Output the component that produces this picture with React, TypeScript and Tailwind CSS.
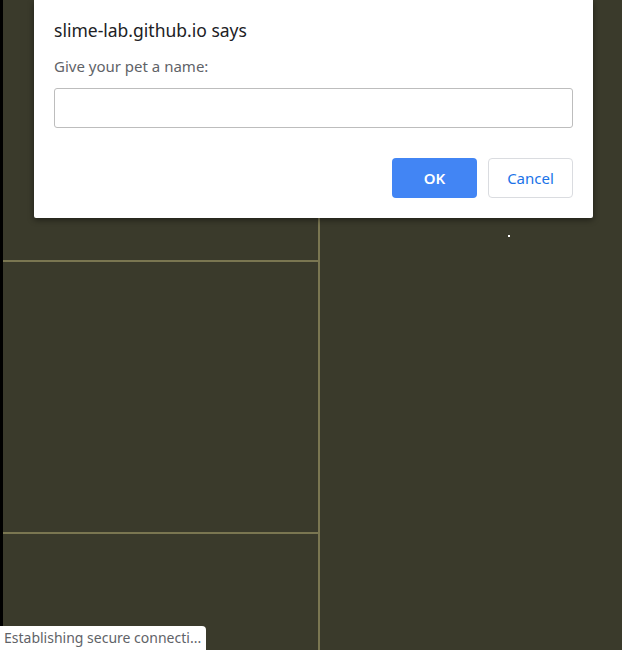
export default function App() {
  return (
    <div className="relative h-[650px] w-[622px] overflow-hidden bg-[#3a3a2b]" style={{ fontFamily: '"Noto Sans", "Open Sans", sans-serif' }}>
      {/* game board */}
      <div className="flex h-full">
        <div className="w-[3px] bg-black" />
        <div className="flex w-[315px] flex-col">
          <div className="h-[260px]" />
          <div className="h-[2px] bg-[#7a7651]" />
          <div className="h-[270px]" />
          <div className="h-[2px] bg-[#7a7651]" />
          <div className="flex-1" />
        </div>
        <div className="w-[2px] bg-[#7a7651]" />
        <div className="flex-1" />
      </div>

      <div className="absolute left-[508px] top-[235px] h-[2px] w-[2px] bg-white" />

      {/* prompt dialog */}
      <div className="absolute left-[34px] top-0 w-[559px] rounded-b-[2px] bg-white px-[20px] pb-[20px] pt-[18px] shadow-[0_2px_6px_rgba(0,0,0,0.45)]">
        <div className="text-[17.5px] leading-[24px] text-[#202124]">slime-lab.github.io says</div>
        <div className="mt-[14px] text-[15px] leading-[20px] text-[#5f6368]">Give your pet a name:</div>
        <input
          type="text"
          className="mt-[12px] block h-[40px] w-full rounded-[3px] border border-[#bdbdbd] px-2 text-[14px] outline-none"
        />
        <div className="mt-[30px] flex justify-end gap-[11px]">
          <button
            type="button"
            className="h-[40px] w-[85px] rounded-[4px] bg-[#4285f4] text-[15px] font-semibold text-white"
          >
            OK
          </button>
          <button
            type="button"
            className="h-[40px] w-[85px] rounded-[4px] border border-[#dadce0] bg-white text-[15px] text-[#1a73e8]"
          >
            Cancel
          </button>
        </div>
      </div>

      {/* status bubble */}
      <div className="absolute bottom-0 left-0 h-[24px] w-[206px] rounded-tr-[4px] bg-white pl-[4px] text-[14px] leading-[24px] text-[#5f6368]">
        Establishing secure connecti...
      </div>
    </div>
  );
}
